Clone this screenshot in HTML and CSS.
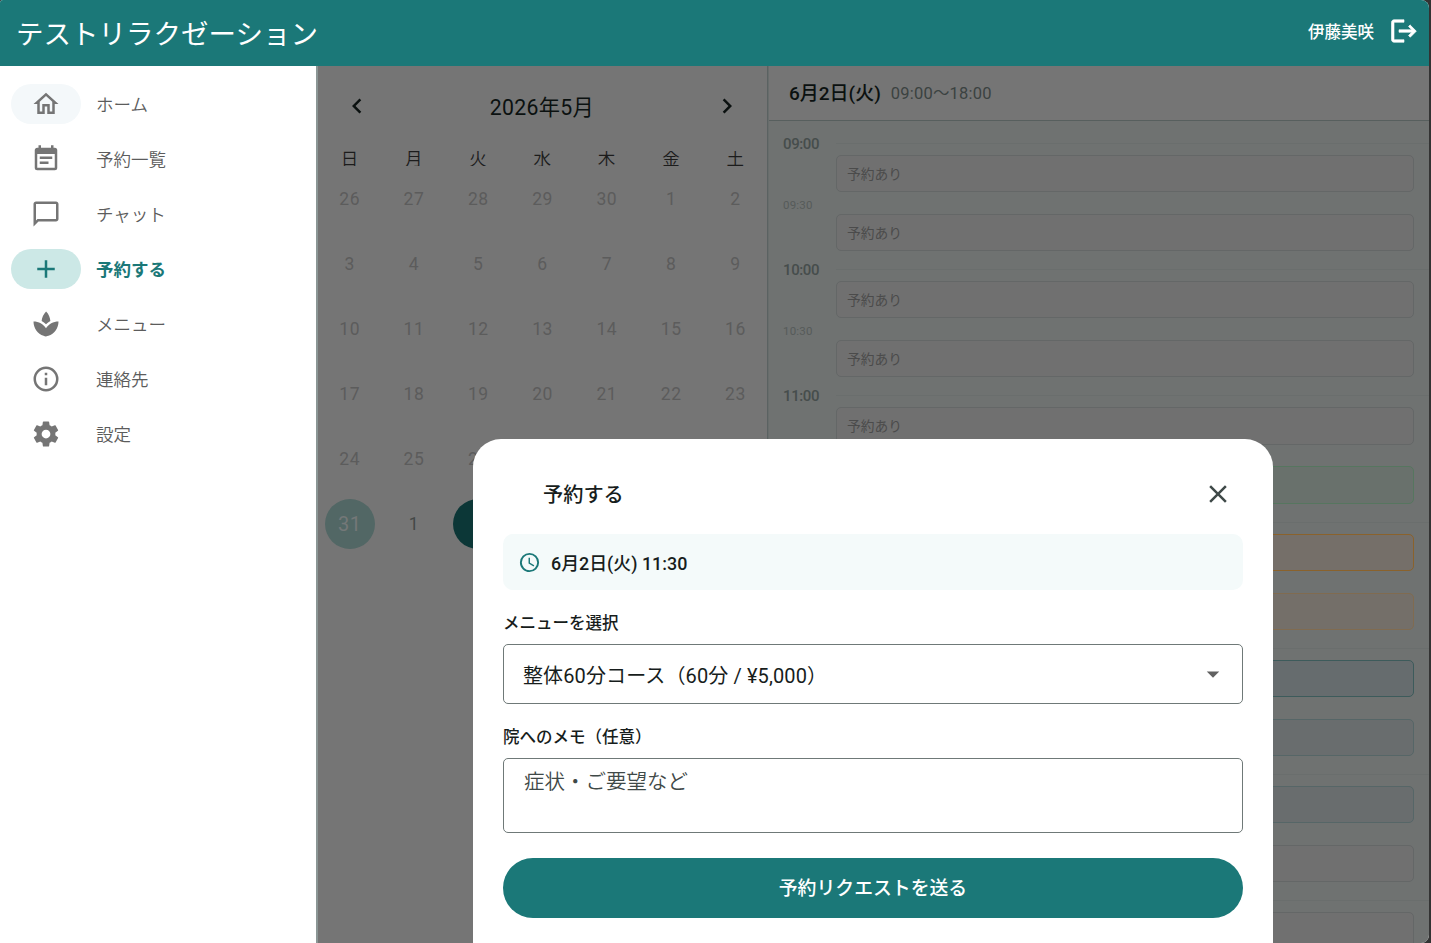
FILE: index.html
```html
<!DOCTYPE html>
<html lang="ja">
<head>
<meta charset="utf-8">
<title>テストリラクゼーション</title>
<link rel="stylesheet" href="styles.css">
</head>
<body>
<div class="app">
  <header class="topbar">
    <h1 class="brand">テストリラクゼーション</h1>
    <span class="user">伊藤美咲</span>
    <svg class="icon logout" viewBox="0 0 24 24"><path d="M17 7L15.59 8.41L18.17 11H8V13H18.17L15.59 15.59L17 17L22 12M4 5H12V3H4C2.9 3 2 3.9 2 5V19C2 20.1 2.9 21 4 21H12V19H4V5Z"/></svg>
  </header>
  <div class="main">
    <nav class="nav">
      <a class="nav-item hovered"><span class="pill"><svg class="icon" viewBox="0 0 24 24"><path d="M12,5.69L17,10.19V18H15V12H9V18H7V10.19L12,5.69M12,3L2,12H5V20H11V14H13V20H19V12H22L12,3Z"/></svg></span><span>ホーム</span></a>
      <a class="nav-item"><span class="pill"><svg class="icon" viewBox="0 0 24 24"><path d="M14,14H7V16H14M19,19H5V8H19M19,3H18V1H16V3H8V1H6V3H5C3.89,3 3,3.9 3,5V19A2,2 0 0,0 5,21H19A2,2 0 0,0 21,19V5A2,2 0 0,0 19,3M17,10H7V12H17V10Z"/></svg></span><span>予約一覧</span></a>
      <a class="nav-item"><span class="pill"><svg class="icon" viewBox="0 0 24 24"><path d="M20 2H4C2.9 2 2 2.9 2 4V22L6 18H20C21.1 18 22 17.1 22 16V4C22 2.9 21.1 2 20 2M20 16H5.17L4 17.17V4H20V16Z"/></svg></span><span>チャット</span></a>
      <a class="nav-item active"><span class="pill"><svg class="icon" viewBox="0 0 24 24"><path d="M19,13H13V19H11V13H5V11H11V5H13V11H19V13Z"/></svg></span><span>予約する</span></a>
      <a class="nav-item"><span class="pill"><svg class="icon" viewBox="0 0 24 24"><path d="M15.49 9.63c-.18-2.79-1.31-5.51-3.43-7.63-2.14 2.14-3.32 4.86-3.55 7.63 1.28.68 2.46 1.56 3.49 2.63 1.03-1.06 2.21-1.94 3.49-2.63zM12 15.45C9.85 12.17 6.18 10 2 10c0 5.32 3.36 9.82 8.03 11.49.63.23 1.29.4 1.97.51.68-.12 1.33-.29 1.97-.51C18.64 19.82 22 15.32 22 10c-4.18 0-7.85 2.17-10 5.45z"/></svg></span><span>メニュー</span></a>
      <a class="nav-item"><span class="pill"><svg class="icon" viewBox="0 0 24 24"><path d="M11,9H13V7H11M12,20C7.59,20 4,16.41 4,12C4,7.59 7.59,4 12,4C16.41,4 20,7.59 20,12C20,16.41 16.41,20 12,20M12,2A10,10 0 0,0 2,12A10,10 0 0,0 12,22A10,10 0 0,0 22,12A10,10 0 0,0 12,2M11,17H13V11H11V17Z"/></svg></span><span>連絡先</span></a>
      <a class="nav-item"><span class="pill"><svg class="icon" viewBox="0 0 24 24"><path d="M12,15.5A3.5,3.5 0 0,1 8.5,12A3.5,3.5 0 0,1 12,8.5A3.5,3.5 0 0,1 15.5,12A3.5,3.5 0 0,1 12,15.5M19.43,12.97C19.47,12.65 19.5,12.33 19.5,12C19.5,11.67 19.47,11.34 19.43,11L21.54,9.37C21.73,9.22 21.78,8.95 21.66,8.73L19.66,5.27C19.54,5.05 19.27,4.96 19.05,5.05L16.56,6.05C16.04,5.66 15.5,5.32 14.87,5.07L14.5,2.42C14.46,2.18 14.25,2 14,2H10C9.75,2 9.54,2.18 9.5,2.42L9.13,5.07C8.5,5.32 7.96,5.66 7.44,6.05L4.95,5.05C4.73,4.96 4.46,5.05 4.34,5.27L2.34,8.73C2.21,8.95 2.27,9.22 2.46,9.37L4.57,11C4.53,11.34 4.5,11.67 4.5,12C4.5,12.33 4.53,12.65 4.57,12.97L2.46,14.63C2.27,14.78 2.21,15.05 2.34,15.27L4.34,18.73C4.46,18.95 4.73,19.03 4.95,18.95L7.44,17.94C7.96,18.34 8.5,18.68 9.13,18.93L9.5,21.58C9.54,21.82 9.75,22 10,22H14C14.25,22 14.46,21.82 14.5,21.58L14.87,18.93C15.5,18.67 16.04,18.34 16.56,17.94L19.05,18.95C19.27,19.03 19.54,18.95 19.66,18.73L21.66,15.27C21.78,15.05 21.73,14.78 21.54,14.63L19.43,12.97Z"/></svg></span><span>設定</span></a>
    </nav>
    <section class="calendar">
      <div class="month">
        <svg class="icon" viewBox="0 0 24 24"><path d="M15.41,16.58L10.83,12L15.41,7.41L14,6L8,12L14,18L15.41,16.58Z"/></svg>
        <span>2026年5月</span>
        <svg class="icon" viewBox="0 0 24 24"><path d="M8.59,16.58L13.17,12L8.59,7.41L10,6L16,12L10,18L8.59,16.58Z"/></svg>
      </div>
      <div class="week names"><span>日</span><span>月</span><span>火</span><span>水</span><span>木</span><span>金</span><span>土</span></div>
      <div class="week"><span>26</span><span>27</span><span>28</span><span>29</span><span>30</span><span>1</span><span>2</span></div>
      <div class="week"><span>3</span><span>4</span><span>5</span><span>6</span><span>7</span><span>8</span><span>9</span></div>
      <div class="week"><span>10</span><span>11</span><span>12</span><span>13</span><span>14</span><span>15</span><span>16</span></div>
      <div class="week"><span>17</span><span>18</span><span>19</span><span>20</span><span>21</span><span>22</span><span>23</span></div>
      <div class="week"><span>24</span><span>25</span><span>26</span><span>27</span><span>28</span><span>29</span><span>30</span></div>
      <div class="week"><span class="today">31</span><span class="open">1</span><span class="selected"></span></div>
    </section>
    <section class="schedule">
      <div class="day-head"><strong>6月2日(火)</strong><span>09:00〜18:00</span></div>
      <div class="hours">
        <div class="hour"><b>09:00</b><i></i><div class="slot">予約あり</div><small>09:30</small><div class="slot half">予約あり</div></div>
        <div class="hour"><b>10:00</b><i></i><div class="slot">予約あり</div><small>10:30</small><div class="slot half">予約あり</div></div>
        <div class="hour"><b>11:00</b><i></i><div class="slot">予約あり</div><small></small><div class="slot half green"></div></div>
        <div class="hour"><b></b><i></i><div class="slot orange"></div><small></small><div class="slot half sand"></div></div>
        <div class="hour"><b></b><i></i><div class="slot teal"></div><small></small><div class="slot half blue"></div></div>
        <div class="hour"><b></b><i></i><div class="slot blue"></div><small></small><div class="slot half"></div></div>
        <div class="hour"><b></b><i></i><div class="slot"></div><small></small><div class="slot half"></div></div>
      </div>
    </section>
  </div>
  <div class="sheet">
    <div class="sheet-head"><h2>予約する</h2><svg class="icon" viewBox="0 0 24 24"><path d="M19,6.41L17.59,5L12,10.59L6.41,5L5,6.41L10.59,12L5,17.59L6.41,19L12,13.41L17.59,19L19,17.59L13.41,12L19,6.41Z"/></svg></div>
    <div class="when"><svg viewBox="0 0 24 24"><path d="M12,20A8,8 0 0,0 20,12A8,8 0 0,0 12,4A8,8 0 0,0 4,12A8,8 0 0,0 12,20M12,2A10,10 0 0,1 22,12A10,10 0 0,1 12,22C6.47,22 2,17.5 2,12A10,10 0 0,1 12,2M12.5,7V12.25L17,14.92L16.25,16.15L11,13V7H12.5Z"/></svg><span>6月2日(火) 11:30</span></div>
    <div class="label">メニューを選択</div>
    <div class="select"><span>整体60分コース（60分 / ¥5,000）</span><svg class="icon" viewBox="0 0 24 24"><path d="M7,10L12,15L17,10H7Z"/></svg></div>
    <div class="label second">院へのメモ（任意）</div>
    <div class="memo">症状・ご要望など</div>
    <button class="submit">予約リクエストを送る</button>
  </div>
</div>
</body>
</html>
```
FILE: styles.css
```css
* { box-sizing: border-box; }
body {
  margin: 0;
  background: #333;
  font-family: Roboto, "Noto Sans CJK JP", sans-serif;
  overflow: hidden;
}
.app {
  position: relative;
  width: 1429px;
  height: 943px;
  display: flex;
  flex-direction: column;
  overflow: hidden;
  border-radius: 3px 8px 8px 0;
  background: #fff;
}
.icon { display: block; width: 30px; height: 30px; flex: none; fill: currentColor; }

.topbar {
  height: 66px;
  flex: none;
  display: flex;
  align-items: center;
  padding: 0 10px 4px 16px;
  background: #1b7878;
  color: #fff;
}
.logout { stroke: currentColor; stroke-width: .5; }
.brand { margin: 7px auto 0 0; font-size: 27.5px; font-weight: 400; line-height: 40px; }
.user { margin: 0 15px 0 0; font-size: 16.5px; font-weight: 500; }

.main { flex: 1; display: flex; min-height: 0; }
.nav { width: 316px; flex: none; padding: 10px 11px; }
.nav-item {
  display: flex;
  align-items: center;
  gap: 15px;
  height: 55px;
  color: #757575;
  font-size: 17.5px;
}
.nav-item > span:last-child { color: #5c5c5c; font-weight: 350; }
.pill { width: 70px; height: 40px; border-radius: 20px; display: grid; place-items: center; }
.hovered .pill { background: #f4f8fa; }
.active { color: #1b7878; }
.nav-item.active > span:last-child { color: #1b7878; font-weight: 700; }
.active .pill { background: #cce8e6; }

.calendar {
  width: 452px;
  flex: none;
  border-left: 2px solid #8b9695;
  border-right: 1px solid #5b6262;
  background: #757575;
}
.month {
  height: 85px;
  padding: 0 25px 5px 24px;
  display: flex;
  align-items: center;
  justify-content: space-between;
  font-size: 21.25px;
  letter-spacing: .3px;
  color: #0b1110;
}
.month span { margin-top: -2px; }
.week {
  display: grid;
  grid-template-columns: repeat(7, 64.3px);
  height: 65px;
  margin-left: -.5px;
  place-items: center;
  font-size: 17.5px;
  letter-spacing: .5px;
  color: #5c5c5c;
}
.names {
  height: 15px;
  overflow: hidden;
  align-items: end;
  font-size: 17.5px;
  font-weight: 350;
  line-height: 17px;
  color: #1c1c1c;
}
.today, .selected { width: 50px; height: 50px; border-radius: 50%; display: grid; place-items: center; }
.today { background: #526765; color: #747878; font-size: 20px; }
.selected { background: #0c3737; }
.open { color: #444847; }

.schedule { flex: 1; display: flex; flex-direction: column; min-width: 0; background: #6f7271; border-left: 1px solid #686d6c; }
.day-head {
  height: 55px;
  flex: none;
  padding: 0 0 2px 20px;
  display: flex;
  align-items: center;
  gap: 10px;
  border-bottom: 1px solid #575f5e;
  background: #757575;
  color: #3b4241;
  font-size: 16.5px;
}
.day-head span { letter-spacing: .2px; }
.day-head strong { margin-top: -1px; font-size: 19px; font-weight: 500; color: #0b1110; }
.hours { flex: 1; min-height: 0; overflow: hidden; padding: 13px 0 0 14px; }
.hour {
  height: 126.2px;
  display: grid;
  grid-template-columns: 53px 1fr;
  grid-template-rows: 21px 37.2px 21.8px 37.2px;
  color: #464d4c;
}
.hour b { font-size: 15px; font-weight: 500; line-height: 20px; letter-spacing: -.4px; }
.hour i { height: 1px; margin-top: 9px; background: #6a6e6d; }
.hour small { grid-column: 1; font-size: 11.5px; line-height: 27px; letter-spacing: .2px; color: #565b5a; }
.slot {
  grid-column: 2;
  margin-right: 15px;
  padding: 0 0 0 10px;
  border: 1px solid #646767;
  border-radius: 5px;
  background: #707070;
  color: #4b4b4b;
  font-size: 13.75px;
  line-height: 37px;
}
.half { grid-row: 4; }
.green { border-color: #56765f; background: #69716c; }
.orange { border-color: #8a622c; background: #756f69; }
.sand { border-color: #806b50; background: #746f69; }
.teal { border-color: #3d5b5b; background: #666c6e; }
.blue { border-color: #566667; background: #696d6e; }

/* Booking sheet rises over the dimmed calendar. */
.sheet {
  position: absolute;
  left: 473px;
  top: 439px;
  width: 800px;
  height: 504px;
  padding: 35px 30px 0;
  display: flex;
  flex-direction: column;
  border-radius: 28px 28px 0 0;
  background: #fff;
  color: #171d1c;
}
.sheet-head {
  height: 40px;
  padding: 0 10px 0 40px;
  display: flex;
  align-items: center;
  justify-content: space-between;
}
.sheet-head h2 { margin: -1px 0 0; font-size: 20.2px; font-weight: 500; }
.sheet-head .icon { color: #3f4948; }
.when {
  height: 56px;
  margin-top: 20px;
  padding-left: 15px;
  display: flex;
  align-items: center;
  gap: 10px;
  border-radius: 10px;
  background: #f4fafa;
  font-size: 17.9px;
  font-weight: 500;
}
.when span { margin-top: -1px; }
.when svg { width: 23px; height: 23px; fill: #1b7878; }
.label { margin-top: 21px; height: 25px; font-size: 16.5px; font-weight: 500; line-height: 25px; }
.second { margin-top: 21px; }
.select, .memo { border: 1px solid #6f7978; border-radius: 5px; padding: 0 14px 0 20px; font-size: 20px; }
.select { height: 60px; margin-top: 8px; display: flex; align-items: center; justify-content: space-between; }
.select span { margin-left: -1px; letter-spacing: .12px; }
.select .icon { color: #616161; }
.memo { height: 75px; margin-top: 8px; padding-top: 8px; line-height: 30px; color: #3f4948; font-size: 20.5px; font-weight: 350; }
.submit {
  height: 60px;
  margin-top: 25px;
  padding: 2px 0 0;
  border: 0;
  border-radius: 30px;
  background: #1b7878;
  color: #fff;
  font: 500 18.85px/58px Roboto, "Noto Sans CJK JP", sans-serif;
}
```
